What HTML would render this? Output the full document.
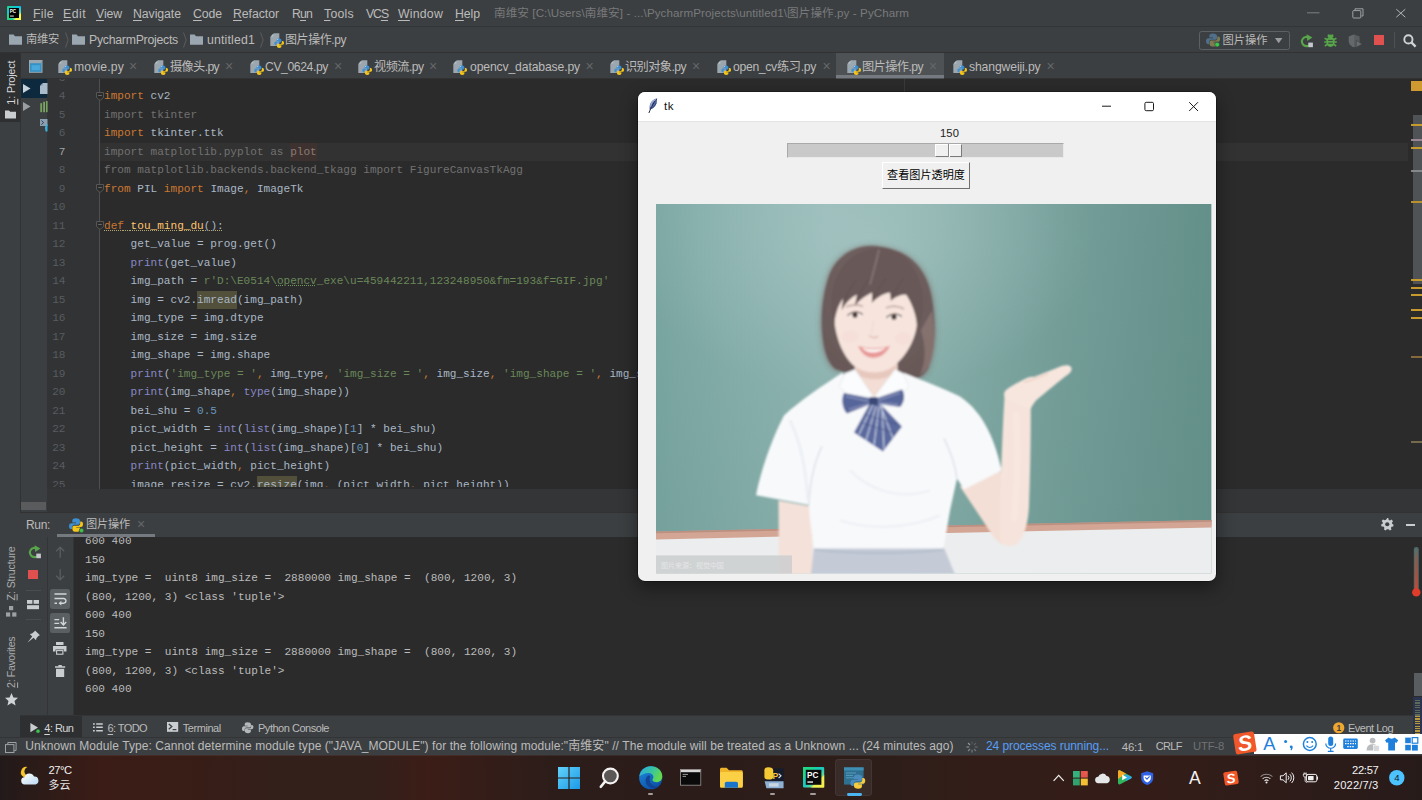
<!DOCTYPE html>
<html lang="zh-CN"><head><meta charset="utf-8"><title>PyCharm</title>
<style>
html,body{margin:0;padding:0;background:#2b2b2b;}
body{width:1422px;height:800px;overflow:hidden;}
#root{position:relative;width:1422px;height:800px;overflow:hidden;background:#2b2b2b;font-family:"Liberation Sans","Noto Sans CJK SC",sans-serif;}
#root *{box-sizing:border-box;}
.a{position:absolute;}
.t{position:absolute;white-space:pre;}
svg{position:absolute;overflow:visible;}
.code{position:absolute;white-space:pre;font:11.08px/18.5px "Liberation Mono","Noto Sans CJK SC",monospace;color:#a9b7c6;}
.k{color:#cc7832;} .s{color:#6a8759;} .n{color:#6897bb;} .b{color:#8888c6;} .u{color:#717171;} .f{color:#ffc66d;}
.hl{background:#52503a;padding:3px 0;}
.ln{position:absolute;left:47px;width:19.5px;text-align:right;font:11.08px/18.5px "Liberation Mono",monospace;color:#606366;}
.m{font-family:"Liberation Mono","Noto Sans CJK SC",monospace;}

</style></head>
<body>
<div id="root">
<!-- base.html -->
<!-- menu bar -->
<div class="a" style="left:0;top:0;width:1422px;height:27px;background:#3c3f41;"></div>
<div class="a" style="left:0;top:26px;width:1422px;height:1px;background:#323435;"></div>
<!-- nav bar -->
<div class="a" style="left:0;top:27px;width:1422px;height:26px;background:#3c3f41;"></div>
<div class="a" style="left:0;top:52px;width:1422px;height:1px;background:#323232;"></div>
<!-- tab bar -->
<div class="a" style="left:20px;top:53px;width:1402px;height:26px;background:#3c3f41;"></div>
<div class="a" style="left:20px;top:78px;width:1402px;height:1px;background:#323232;"></div>
<!-- left stripe -->
<div class="a" style="left:0;top:53px;width:20px;height:684px;background:#3c3f41;"></div>
<div class="a" style="left:0;top:53px;width:20px;height:69px;background:#2d2f30;"></div>
<div class="a" style="left:20px;top:53px;width:1px;height:665px;background:#323232;"></div>
<!-- project sliver -->
<div class="a" style="left:21px;top:79px;width:26px;height:422px;background:#3c3f41;"></div>
<div class="a" style="left:21px;top:79px;width:26px;height:19px;background:#0d293e;"></div>
<!-- gutter -->
<div class="a" style="left:47px;top:79px;width:53px;height:411px;background:#313335;"></div>
<div class="a" style="left:99px;top:79px;width:1px;height:411px;background:#4e4e4e;"></div>
<!-- editor -->
<div class="a" style="left:100px;top:79px;width:1308px;height:411px;background:#2b2b2b;"></div>
<!-- current line -->
<div class="a" style="left:100px;top:142.7px;width:1308px;height:18.5px;background:#323232;"></div>
<!-- right margin guide -->
<div class="a" style="left:904px;top:79px;width:1px;height:411px;background:#3a3a3a;"></div>
<!-- right error stripe -->
<div class="a" style="left:1408px;top:79px;width:14px;height:433px;background:#2b2b2b;"></div>

<!-- icons.html -->
<div class="a" style="left:836px;top:53px;width:108px;height:25.5px;background:#4e5254;"></div><div class="a" style="left:836px;top:75.4px;width:108px;height:3.1px;background:#747a80;"></div>
<svg style="left:7px;top:6px" width="14" height="14" viewBox="0 0 14 14" ><defs><linearGradient id="pcg" x1="0" y1="0" x2="1" y2="1"><stop offset="0" stop-color="#21d789"/><stop offset="0.5" stop-color="#07c3f2"/><stop offset="1" stop-color="#fcf84a"/></linearGradient></defs><rect x="0" y="0" width="14" height="14" rx="1" fill="url(#pcg)"/><path d="M0 7V14H7Z" fill="#21d789"/><path d="M14 7V14H7Z" fill="#fcf84a"/><rect x="2" y="2" width="10" height="10" fill="#000"/><text x="2.8" y="7.3" font-family="Liberation Sans,sans-serif" font-weight="700" font-size="4.6" fill="#fff">PC</text><rect x="3" y="9.6" width="3.8" height="0.9" fill="#fff"/></svg>
<svg style="left:9px;top:33.5px" width="13" height="11" viewBox="0 0 13 11" ><path d="M0 0.5H4.6L6 2.2H13V10.8H0Z" fill="#9aa7b0"/></svg>
<svg style="left:64.5px;top:31.5px" width="4" height="16" viewBox="0 0 4 16" ><path d="M0.5 0.5L3.2 8L0.5 15.5" fill="none" stroke="#5c5f61" stroke-width="0.9"/></svg>
<svg style="left:72px;top:33.5px" width="13" height="11" viewBox="0 0 13 11" ><path d="M0 0.5H4.6L6 2.2H13V10.8H0Z" fill="#9aa7b0"/></svg>
<svg style="left:182.5px;top:31.5px" width="4" height="16" viewBox="0 0 4 16" ><path d="M0.5 0.5L3.2 8L0.5 15.5" fill="none" stroke="#5c5f61" stroke-width="0.9"/></svg>
<svg style="left:190px;top:33.5px" width="13" height="11" viewBox="0 0 13 11" ><path d="M0 0.5H4.6L6 2.2H13V10.8H0Z" fill="#9aa7b0"/></svg>
<svg style="left:260px;top:31.5px" width="4" height="16" viewBox="0 0 4 16" ><path d="M0.5 0.5L3.2 8L0.5 15.5" fill="none" stroke="#5c5f61" stroke-width="0.9"/></svg>
<svg style="left:270px;top:32.5px" width="14.0" height="15.0" viewBox="0 0 14 15" ><path d="M4 0.3H9.3V13H0.3V4Z" fill="#a5b1ba" opacity="0.9"/><path d="M3.4 0.5V3.4H0.5Z" fill="#c3ccd3" opacity="0.75"/><path d="M5 10.2V7.6C5 6.3 6 5.6 7.6 5.6H9.4C10.9 5.6 11.7 6.4 11.7 7.6V9.2H8.4V9.9H10.4" fill="none"/><path d="M8.7 5.4C7.2 5.4 6.6 6 6.6 7V8H8.9V8.5H5.8C4.9 8.5 4.4 9.3 4.4 10.4C4.4 11.5 4.9 12.2 5.8 12.2H6.5V10.9C6.5 10 7.2 9.4 8 9.4H10.3C11 9.4 11.4 8.9 11.4 8.2V7C11.4 6 10.4 5.4 8.7 5.4Z" fill="#3e8fd0"/><path d="M9.3 14.9C10.8 14.9 11.4 14.3 11.4 13.3V12.3H9.1V11.8H12.6C13.5 11.8 14 11 14 9.9C14 8.8 13.5 8.1 12.6 8.1H11.9V9.4C11.9 10.3 11.2 10.9 10.4 10.9H8.1C7.4 10.9 7 11.4 7 12.1V13.3C7 14.3 7.8 14.9 9.3 14.9Z" fill="#f5c518"/><circle cx="7.7" cy="6.6" r="0.5" fill="#dfefff"/></svg>
<svg style="left:29px;top:60px" width="13.5" height="12.8" viewBox="0 0 13.5 12.8" ><rect x="0.5" y="0.5" width="12.5" height="11.8" fill="#3592c4" stroke="#9aa7b0" stroke-width="1"/><rect x="1" y="1" width="11.5" height="2.2" fill="#9aa7b0"/><rect x="2.6" y="5.2" width="8.3" height="5" fill="#4aa8dc"/></svg>
<svg style="left:58px;top:59.5px" width="14.0" height="15.0" viewBox="0 0 14 15" ><path d="M4 0.3H9.3V13H0.3V4Z" fill="#a5b1ba" opacity="0.9"/><path d="M3.4 0.5V3.4H0.5Z" fill="#c3ccd3" opacity="0.75"/><path d="M5 10.2V7.6C5 6.3 6 5.6 7.6 5.6H9.4C10.9 5.6 11.7 6.4 11.7 7.6V9.2H8.4V9.9H10.4" fill="none"/><path d="M8.7 5.4C7.2 5.4 6.6 6 6.6 7V8H8.9V8.5H5.8C4.9 8.5 4.4 9.3 4.4 10.4C4.4 11.5 4.9 12.2 5.8 12.2H6.5V10.9C6.5 10 7.2 9.4 8 9.4H10.3C11 9.4 11.4 8.9 11.4 8.2V7C11.4 6 10.4 5.4 8.7 5.4Z" fill="#3e8fd0"/><path d="M9.3 14.9C10.8 14.9 11.4 14.3 11.4 13.3V12.3H9.1V11.8H12.6C13.5 11.8 14 11 14 9.9C14 8.8 13.5 8.1 12.6 8.1H11.9V9.4C11.9 10.3 11.2 10.9 10.4 10.9H8.1C7.4 10.9 7 11.4 7 12.1V13.3C7 14.3 7.8 14.9 9.3 14.9Z" fill="#f5c518"/><circle cx="7.7" cy="6.6" r="0.5" fill="#dfefff"/></svg>
<svg style="left:154px;top:59.5px" width="14.0" height="15.0" viewBox="0 0 14 15" ><path d="M4 0.3H9.3V13H0.3V4Z" fill="#a5b1ba" opacity="0.9"/><path d="M3.4 0.5V3.4H0.5Z" fill="#c3ccd3" opacity="0.75"/><path d="M5 10.2V7.6C5 6.3 6 5.6 7.6 5.6H9.4C10.9 5.6 11.7 6.4 11.7 7.6V9.2H8.4V9.9H10.4" fill="none"/><path d="M8.7 5.4C7.2 5.4 6.6 6 6.6 7V8H8.9V8.5H5.8C4.9 8.5 4.4 9.3 4.4 10.4C4.4 11.5 4.9 12.2 5.8 12.2H6.5V10.9C6.5 10 7.2 9.4 8 9.4H10.3C11 9.4 11.4 8.9 11.4 8.2V7C11.4 6 10.4 5.4 8.7 5.4Z" fill="#3e8fd0"/><path d="M9.3 14.9C10.8 14.9 11.4 14.3 11.4 13.3V12.3H9.1V11.8H12.6C13.5 11.8 14 11 14 9.9C14 8.8 13.5 8.1 12.6 8.1H11.9V9.4C11.9 10.3 11.2 10.9 10.4 10.9H8.1C7.4 10.9 7 11.4 7 12.1V13.3C7 14.3 7.8 14.9 9.3 14.9Z" fill="#f5c518"/><circle cx="7.7" cy="6.6" r="0.5" fill="#dfefff"/></svg>
<svg style="left:250px;top:59.5px" width="14.0" height="15.0" viewBox="0 0 14 15" ><path d="M4 0.3H9.3V13H0.3V4Z" fill="#a5b1ba" opacity="0.9"/><path d="M3.4 0.5V3.4H0.5Z" fill="#c3ccd3" opacity="0.75"/><path d="M5 10.2V7.6C5 6.3 6 5.6 7.6 5.6H9.4C10.9 5.6 11.7 6.4 11.7 7.6V9.2H8.4V9.9H10.4" fill="none"/><path d="M8.7 5.4C7.2 5.4 6.6 6 6.6 7V8H8.9V8.5H5.8C4.9 8.5 4.4 9.3 4.4 10.4C4.4 11.5 4.9 12.2 5.8 12.2H6.5V10.9C6.5 10 7.2 9.4 8 9.4H10.3C11 9.4 11.4 8.9 11.4 8.2V7C11.4 6 10.4 5.4 8.7 5.4Z" fill="#3e8fd0"/><path d="M9.3 14.9C10.8 14.9 11.4 14.3 11.4 13.3V12.3H9.1V11.8H12.6C13.5 11.8 14 11 14 9.9C14 8.8 13.5 8.1 12.6 8.1H11.9V9.4C11.9 10.3 11.2 10.9 10.4 10.9H8.1C7.4 10.9 7 11.4 7 12.1V13.3C7 14.3 7.8 14.9 9.3 14.9Z" fill="#f5c518"/><circle cx="7.7" cy="6.6" r="0.5" fill="#dfefff"/></svg>
<svg style="left:358px;top:59.5px" width="14.0" height="15.0" viewBox="0 0 14 15" ><path d="M4 0.3H9.3V13H0.3V4Z" fill="#a5b1ba" opacity="0.9"/><path d="M3.4 0.5V3.4H0.5Z" fill="#c3ccd3" opacity="0.75"/><path d="M5 10.2V7.6C5 6.3 6 5.6 7.6 5.6H9.4C10.9 5.6 11.7 6.4 11.7 7.6V9.2H8.4V9.9H10.4" fill="none"/><path d="M8.7 5.4C7.2 5.4 6.6 6 6.6 7V8H8.9V8.5H5.8C4.9 8.5 4.4 9.3 4.4 10.4C4.4 11.5 4.9 12.2 5.8 12.2H6.5V10.9C6.5 10 7.2 9.4 8 9.4H10.3C11 9.4 11.4 8.9 11.4 8.2V7C11.4 6 10.4 5.4 8.7 5.4Z" fill="#3e8fd0"/><path d="M9.3 14.9C10.8 14.9 11.4 14.3 11.4 13.3V12.3H9.1V11.8H12.6C13.5 11.8 14 11 14 9.9C14 8.8 13.5 8.1 12.6 8.1H11.9V9.4C11.9 10.3 11.2 10.9 10.4 10.9H8.1C7.4 10.9 7 11.4 7 12.1V13.3C7 14.3 7.8 14.9 9.3 14.9Z" fill="#f5c518"/><circle cx="7.7" cy="6.6" r="0.5" fill="#dfefff"/></svg>
<svg style="left:453px;top:59.5px" width="14.0" height="15.0" viewBox="0 0 14 15" ><path d="M4 0.3H9.3V13H0.3V4Z" fill="#a5b1ba" opacity="0.9"/><path d="M3.4 0.5V3.4H0.5Z" fill="#c3ccd3" opacity="0.75"/><path d="M5 10.2V7.6C5 6.3 6 5.6 7.6 5.6H9.4C10.9 5.6 11.7 6.4 11.7 7.6V9.2H8.4V9.9H10.4" fill="none"/><path d="M8.7 5.4C7.2 5.4 6.6 6 6.6 7V8H8.9V8.5H5.8C4.9 8.5 4.4 9.3 4.4 10.4C4.4 11.5 4.9 12.2 5.8 12.2H6.5V10.9C6.5 10 7.2 9.4 8 9.4H10.3C11 9.4 11.4 8.9 11.4 8.2V7C11.4 6 10.4 5.4 8.7 5.4Z" fill="#3e8fd0"/><path d="M9.3 14.9C10.8 14.9 11.4 14.3 11.4 13.3V12.3H9.1V11.8H12.6C13.5 11.8 14 11 14 9.9C14 8.8 13.5 8.1 12.6 8.1H11.9V9.4C11.9 10.3 11.2 10.9 10.4 10.9H8.1C7.4 10.9 7 11.4 7 12.1V13.3C7 14.3 7.8 14.9 9.3 14.9Z" fill="#f5c518"/><circle cx="7.7" cy="6.6" r="0.5" fill="#dfefff"/></svg>
<svg style="left:610px;top:59.5px" width="14.0" height="15.0" viewBox="0 0 14 15" ><path d="M4 0.3H9.3V13H0.3V4Z" fill="#a5b1ba" opacity="0.9"/><path d="M3.4 0.5V3.4H0.5Z" fill="#c3ccd3" opacity="0.75"/><path d="M5 10.2V7.6C5 6.3 6 5.6 7.6 5.6H9.4C10.9 5.6 11.7 6.4 11.7 7.6V9.2H8.4V9.9H10.4" fill="none"/><path d="M8.7 5.4C7.2 5.4 6.6 6 6.6 7V8H8.9V8.5H5.8C4.9 8.5 4.4 9.3 4.4 10.4C4.4 11.5 4.9 12.2 5.8 12.2H6.5V10.9C6.5 10 7.2 9.4 8 9.4H10.3C11 9.4 11.4 8.9 11.4 8.2V7C11.4 6 10.4 5.4 8.7 5.4Z" fill="#3e8fd0"/><path d="M9.3 14.9C10.8 14.9 11.4 14.3 11.4 13.3V12.3H9.1V11.8H12.6C13.5 11.8 14 11 14 9.9C14 8.8 13.5 8.1 12.6 8.1H11.9V9.4C11.9 10.3 11.2 10.9 10.4 10.9H8.1C7.4 10.9 7 11.4 7 12.1V13.3C7 14.3 7.8 14.9 9.3 14.9Z" fill="#f5c518"/><circle cx="7.7" cy="6.6" r="0.5" fill="#dfefff"/></svg>
<svg style="left:716.5px;top:59.5px" width="14.0" height="15.0" viewBox="0 0 14 15" ><path d="M4 0.3H9.3V13H0.3V4Z" fill="#a5b1ba" opacity="0.9"/><path d="M3.4 0.5V3.4H0.5Z" fill="#c3ccd3" opacity="0.75"/><path d="M5 10.2V7.6C5 6.3 6 5.6 7.6 5.6H9.4C10.9 5.6 11.7 6.4 11.7 7.6V9.2H8.4V9.9H10.4" fill="none"/><path d="M8.7 5.4C7.2 5.4 6.6 6 6.6 7V8H8.9V8.5H5.8C4.9 8.5 4.4 9.3 4.4 10.4C4.4 11.5 4.9 12.2 5.8 12.2H6.5V10.9C6.5 10 7.2 9.4 8 9.4H10.3C11 9.4 11.4 8.9 11.4 8.2V7C11.4 6 10.4 5.4 8.7 5.4Z" fill="#3e8fd0"/><path d="M9.3 14.9C10.8 14.9 11.4 14.3 11.4 13.3V12.3H9.1V11.8H12.6C13.5 11.8 14 11 14 9.9C14 8.8 13.5 8.1 12.6 8.1H11.9V9.4C11.9 10.3 11.2 10.9 10.4 10.9H8.1C7.4 10.9 7 11.4 7 12.1V13.3C7 14.3 7.8 14.9 9.3 14.9Z" fill="#f5c518"/><circle cx="7.7" cy="6.6" r="0.5" fill="#dfefff"/></svg>
<svg style="left:847px;top:59.5px" width="14.0" height="15.0" viewBox="0 0 14 15" ><path d="M4 0.3H9.3V13H0.3V4Z" fill="#a5b1ba" opacity="0.9"/><path d="M3.4 0.5V3.4H0.5Z" fill="#c3ccd3" opacity="0.75"/><path d="M5 10.2V7.6C5 6.3 6 5.6 7.6 5.6H9.4C10.9 5.6 11.7 6.4 11.7 7.6V9.2H8.4V9.9H10.4" fill="none"/><path d="M8.7 5.4C7.2 5.4 6.6 6 6.6 7V8H8.9V8.5H5.8C4.9 8.5 4.4 9.3 4.4 10.4C4.4 11.5 4.9 12.2 5.8 12.2H6.5V10.9C6.5 10 7.2 9.4 8 9.4H10.3C11 9.4 11.4 8.9 11.4 8.2V7C11.4 6 10.4 5.4 8.7 5.4Z" fill="#3e8fd0"/><path d="M9.3 14.9C10.8 14.9 11.4 14.3 11.4 13.3V12.3H9.1V11.8H12.6C13.5 11.8 14 11 14 9.9C14 8.8 13.5 8.1 12.6 8.1H11.9V9.4C11.9 10.3 11.2 10.9 10.4 10.9H8.1C7.4 10.9 7 11.4 7 12.1V13.3C7 14.3 7.8 14.9 9.3 14.9Z" fill="#f5c518"/><circle cx="7.7" cy="6.6" r="0.5" fill="#dfefff"/></svg>
<svg style="left:953px;top:59.5px" width="14.0" height="15.0" viewBox="0 0 14 15" ><path d="M4 0.3H9.3V13H0.3V4Z" fill="#a5b1ba" opacity="0.9"/><path d="M3.4 0.5V3.4H0.5Z" fill="#c3ccd3" opacity="0.75"/><path d="M5 10.2V7.6C5 6.3 6 5.6 7.6 5.6H9.4C10.9 5.6 11.7 6.4 11.7 7.6V9.2H8.4V9.9H10.4" fill="none"/><path d="M8.7 5.4C7.2 5.4 6.6 6 6.6 7V8H8.9V8.5H5.8C4.9 8.5 4.4 9.3 4.4 10.4C4.4 11.5 4.9 12.2 5.8 12.2H6.5V10.9C6.5 10 7.2 9.4 8 9.4H10.3C11 9.4 11.4 8.9 11.4 8.2V7C11.4 6 10.4 5.4 8.7 5.4Z" fill="#3e8fd0"/><path d="M9.3 14.9C10.8 14.9 11.4 14.3 11.4 13.3V12.3H9.1V11.8H12.6C13.5 11.8 14 11 14 9.9C14 8.8 13.5 8.1 12.6 8.1H11.9V9.4C11.9 10.3 11.2 10.9 10.4 10.9H8.1C7.4 10.9 7 11.4 7 12.1V13.3C7 14.3 7.8 14.9 9.3 14.9Z" fill="#f5c518"/><circle cx="7.7" cy="6.6" r="0.5" fill="#dfefff"/></svg>
<div class="a" style="left:1198.5px;top:30.5px;width:91px;height:19.5px;border:1px solid #5e6163;border-radius:2.5px;"></div>
<svg style="left:1205.5px;top:33px" width="14" height="14" viewBox="0 0 14 14" ><path d="M6.8 0.4C4.3 0.4 3.3 1.4 3.3 3V4.6H7V5.3H2.2C0.8 5.3 0 6.6 0 8.3C0 10 0.8 11.2 2.2 11.2H3.2V9.2C3.2 7.8 4.3 6.8 5.6 6.8H9.2C10.3 6.8 11 6 11 4.9V3C11 1.4 9.5 0.4 6.8 0.4Z" fill="#4f6f8a"/><path d="M7.6 13.6C10.1 13.6 11.1 12.6 11.1 11V9.4H7.4V8.7H12.2C13.6 8.7 14 7.4 14 5.7C14 4.6 13.4 3.6 12.2 3.6H11.4V5.2C11.4 6.6 10.3 7.6 9 7.6H5.4C4.3 7.6 3.6 8.4 3.6 9.5V11C3.6 12.6 4.9 13.6 7.6 13.6Z" fill="#807c52"/><circle cx="11.2" cy="11.6" r="2.4" fill="#35c94d" stroke="#3c3f41" stroke-width="0.6"/></svg>
<svg style="left:1275px;top:38px" width="7.4" height="5.4" viewBox="0 0 7.4 5.4" ><path d="M0 0H7.4L3.7 5.2Z" fill="#9a9da0"/></svg>
<svg style="left:1300px;top:33.5px" width="13.5" height="13.5" viewBox="0 0 13.5 13.5" ><path d="M9.2 3.8A4.6 4.6 0 1 0 10.6 9.6" fill="none" stroke="#57a64a" stroke-width="2.1"/><path d="M6.6 0.2L12.4 3.6L7.2 7Z" fill="#57a64a"/><rect x="8.3" y="8.6" width="4.6" height="4.6" fill="#c4c8cc"/></svg>
<svg style="left:1323.5px;top:33.5px" width="13" height="13.5" viewBox="0 0 13 13.5" ><ellipse cx="6.5" cy="7.8" rx="4.3" ry="5.1" fill="#57a64a"/><path d="M3.6 3.2A2.9 2.6 0 0 1 9.4 3.2Z" fill="#57a64a"/><path d="M0.6 4.2L3.2 5.6M12.4 4.2L9.8 5.6M0.2 8H2.8M12.8 8H10.2M0.8 12L3.2 10.4M12.2 12L9.8 10.4M4 0.6L5 2M9 0.6L8 2" stroke="#57a64a" stroke-width="1.6" fill="none"/><path d="M4.2 6.4H8.8M4.2 9.2H8.8" stroke="#3c3f41" stroke-width="1"/></svg>
<svg style="left:1347.5px;top:33.5px" width="14.5" height="13.5" viewBox="0 0 14.5 13.5" ><path d="M6.2 0.4L11.6 2.4V7.2C11.6 10.2 9 12.4 6.2 13.2C3.4 12.4 0.8 10.2 0.8 7.2V2.4Z" fill="#595c5e"/><path d="M6.2 0.4V13.2C3.4 12.4 0.8 10.2 0.8 7.2V2.4Z" fill="#65686a"/><path d="M8.2 6.4L14.2 9.9L8.2 13.4Z" fill="#6a6d6f" stroke="#3c3f41" stroke-width="0.6"/></svg>
<div class="a" style="left:1374px;top:35.3px;width:9.6px;height:9.6px;background:#e0504e;"></div>
<div class="a" style="left:1393.5px;top:32px;width:1px;height:16px;background:#4d5052;"></div>
<svg style="left:1403px;top:33.5px" width="13.5" height="13.5" viewBox="0 0 13.5 13.5" ><circle cx="5.4" cy="5.4" r="4.1" fill="none" stroke="#d0d3d5" stroke-width="1.9"/><path d="M8.4 8.4L12.6 12.6" stroke="#d0d3d5" stroke-width="2.3"/></svg>
<svg style="left:1300px;top:5px" width="110" height="16" viewBox="1300 5 110 16" ><path d="M1307 12.8H1319.5" stroke="#7c7f81" stroke-width="1"/><path d="M1355 10.4V8.8H1363V16H1361.4" fill="none" stroke="#a9acae" stroke-width="0.9"/><rect x="1352.8" y="10.6" width="8" height="7.4" rx="0.8" fill="none" stroke="#a9acae" stroke-width="0.9"/><path d="M1396.3 9.2L1405.3 17.2M1405.3 9.2L1396.3 17.2" stroke="#b4b7b9" stroke-width="1"/></svg>
<svg style="left:5px;top:110px" width="11" height="8.6" viewBox="0 0 11 8.6" ><path d="M0 0.4H4L5.2 1.8H11V8.6H0Z" fill="#c9cdd0"/></svg>
<svg style="left:5.5px;top:606px" width="10.5" height="10.5" viewBox="0 0 10.5 10.5" ><rect x="0" y="6.4" width="4.2" height="4.2" fill="#9da1a4"/><rect x="6.2" y="6.4" width="4.2" height="4.2" fill="#9da1a4"/><rect x="3" y="0" width="4.2" height="4.2" fill="#9da1a4"/></svg>
<svg style="left:4.5px;top:692.5px" width="13" height="12.5" viewBox="0 0 13 12.5" ><path d="M6.5 0L8.4 4.4L13 4.8L9.5 7.9L10.6 12.5L6.5 10L2.4 12.5L3.5 7.9L0 4.8L4.6 4.4Z" fill="#d0d3d5"/></svg>
<svg style="left:23px;top:84px" width="7.5" height="9" viewBox="0 0 7.5 9" ><path d="M0 0L7.5 4.5L0 9Z" fill="#c6d2dc"/></svg>
<svg style="left:40px;top:83px" width="7.5" height="11" viewBox="0 0 7.5 11" ><path d="M3 0H7.5V11H0V3Z" fill="#a8bccb"/><path d="M2.6 0V2.6H0Z" fill="#7f95a6"/></svg>
<svg style="left:23px;top:102.2px" width="7.5" height="9" viewBox="0 0 7.5 9" ><path d="M0 0L7.5 4.5L0 9Z" fill="#9b9ea1"/></svg>
<svg style="left:40px;top:101px" width="7.5" height="11.5" viewBox="0 0 7.5 11.5" ><rect x="0.3" y="2.2" width="1.8" height="9" fill="#7aa35f"/><rect x="3.2" y="0.8" width="1.8" height="10.4" fill="#7aa35f"/><rect x="6" y="0" width="1.6" height="11.2" fill="#7aa35f"/></svg>
<svg style="left:40px;top:119px" width="7.5" height="13" viewBox="0 0 7.5 13" ><rect x="0" y="0" width="7.5" height="7" fill="#8aa0b2"/><path d="M1.4 1.6L3.6 3.6L1.4 5.6" stroke="#32414d" stroke-width="1" fill="none"/><path d="M7.5 5C5 6 4.4 9 5.6 12.6H7.5Z" fill="#38b1e0"/></svg>
<div class="a" style="left:1411.2px;top:81px;width:10.8px;height:10px;background:#cf9b30;"></div>
<div class="a" style="left:1413px;top:115px;width:9px;height:169px;background:#505355;"></div>
<div class="a" style="left:1410.5px;top:124px;width:11.5px;height:2px;background:#c79a2e;"></div>
<div class="a" style="left:1410.5px;top:146.7px;width:11.5px;height:2px;background:#c79a2e;"></div>
<div class="a" style="left:1410.5px;top:201px;width:11.5px;height:2px;background:#b8902e;"></div>
<div class="a" style="left:1410.5px;top:278.7px;width:11.5px;height:2px;background:#c79a2e;"></div>
<div class="a" style="left:1410.5px;top:286.5px;width:11.5px;height:2px;background:#c79a2e;"></div>
<div class="a" style="left:1410.5px;top:294px;width:11.5px;height:2px;background:#c79a2e;"></div>
<div class="a" style="left:1410.5px;top:309px;width:11.5px;height:2px;background:#c79a2e;"></div>
<div class="a" style="left:1410.5px;top:317px;width:11.5px;height:2px;background:#c79a2e;"></div>
<div class="a" style="left:1410.5px;top:139px;width:11.5px;height:2px;background:#9a8796;"></div>
<div class="a" style="left:1410.5px;top:170px;width:11.5px;height:2px;background:#85878a;"></div>
<div class="a" style="left:1410.5px;top:355.6px;width:11.5px;height:2px;background:#86693a;"></div>
<div class="a" style="left:1410.5px;top:441px;width:11.5px;height:2px;background:#756a4c;"></div>

<!-- editor.html -->
<div class="a" id="ed" style="left:47px;top:79px;width:1361px;height:408px;overflow:hidden;">
<div class="ln" style="left:-1px;top:-10.30px;color:#595c5f">3</div>
<div class="ln" style="left:-1px;top:8.20px;color:#595c5f">4</div>
<div class="code" style="left:57px;top:8.20px"><span class="k">import</span> cv2</div>
<div class="ln" style="left:-1px;top:26.70px;color:#595c5f">5</div>
<div class="code" style="left:57px;top:26.70px"><span class="u">import tkinter</span></div>
<div class="ln" style="left:-1px;top:45.20px;color:#595c5f">6</div>
<div class="code" style="left:57px;top:45.20px"><span class="k">import</span> tkinter.ttk</div>
<div class="ln" style="left:-1px;top:63.70px;color:#a4a3a3">7</div>
<div class="code" style="left:57px;top:63.70px"><span class="u">import matplotlib.pyplot as <span style="background:#3e3230;color:#8a7a72;padding:3px 0">plot</span></span></div>
<div class="ln" style="left:-1px;top:82.20px;color:#595c5f">8</div>
<div class="code" style="left:57px;top:82.20px"><span class="u">from matplotlib.backends.backend_tkagg import FigureCanvasTkAgg</span></div>
<div class="ln" style="left:-1px;top:100.70px;color:#595c5f">9</div>
<div class="code" style="left:57px;top:100.70px"><span class="k">from</span> PIL <span class="k">import</span> Image<span class="k">,</span> ImageTk</div>
<div class="ln" style="left:-1px;top:119.20px;color:#595c5f">10</div>
<div class="ln" style="left:-1px;top:137.70px;color:#595c5f">11</div>
<div class="code" style="left:57px;top:137.70px"><span style="text-decoration:underline dotted #b3a672;text-decoration-thickness:1.3px;text-underline-offset:1.2px"><span class="k">def</span> <span class="f">tou_ming_du</span>():</span></div>
<div class="ln" style="left:-1px;top:156.20px;color:#595c5f">12</div>
<div class="code" style="left:57px;top:156.20px">    get_value = prog.get()</div>
<div class="ln" style="left:-1px;top:174.70px;color:#595c5f">13</div>
<div class="code" style="left:57px;top:174.70px">    <span class="b">print</span>(get_value)</div>
<div class="ln" style="left:-1px;top:193.20px;color:#595c5f">14</div>
<div class="code" style="left:57px;top:193.20px">    img_path = <span class="s">r'D:\E0514\<span style="text-decoration:underline dotted #6f9a5c;text-decoration-thickness:1.3px;text-underline-offset:1.2px">opencv</span>_exe\u=459442211,123248950&amp;fm=193&amp;f=GIF.jpg'</span></div>
<div class="ln" style="left:-1px;top:211.70px;color:#595c5f">15</div>
<div class="code" style="left:57px;top:211.70px">    img = cv2.<span class="hl">imread</span>(img_path)</div>
<div class="ln" style="left:-1px;top:230.20px;color:#595c5f">16</div>
<div class="code" style="left:57px;top:230.20px">    img_type = img.dtype</div>
<div class="ln" style="left:-1px;top:248.70px;color:#595c5f">17</div>
<div class="code" style="left:57px;top:248.70px">    img_size = img.size</div>
<div class="ln" style="left:-1px;top:267.20px;color:#595c5f">18</div>
<div class="code" style="left:57px;top:267.20px">    img_shape = img.shape</div>
<div class="ln" style="left:-1px;top:285.70px;color:#595c5f">19</div>
<div class="code" style="left:57px;top:285.70px">    <span class="b">print</span>(<span class="s">'img_type = '</span><span class="k">,</span> img_type<span class="k">,</span> <span class="s">'img_size = '</span><span class="k">,</span> img_size<span class="k">,</span> <span class="s">'img_shape = '</span><span class="k">,</span> img_shape)</div>
<div class="ln" style="left:-1px;top:304.20px;color:#595c5f">20</div>
<div class="code" style="left:57px;top:304.20px">    <span class="b">print</span>(img_shape<span class="k">,</span> <span class="b">type</span>(img_shape))</div>
<div class="ln" style="left:-1px;top:322.70px;color:#595c5f">21</div>
<div class="code" style="left:57px;top:322.70px">    bei_shu = <span class="n">0.5</span></div>
<div class="ln" style="left:-1px;top:341.20px;color:#595c5f">22</div>
<div class="code" style="left:57px;top:341.20px">    pict_width = <span class="b">int</span>(<span class="b">list</span>(img_shape)[<span class="n">1</span>] * bei_shu)</div>
<div class="ln" style="left:-1px;top:359.70px;color:#595c5f">23</div>
<div class="code" style="left:57px;top:359.70px">    pict_height = <span class="b">int</span>(<span class="b">list</span>(img_shape)[<span class="n">0</span>] * bei_shu)</div>
<div class="ln" style="left:-1px;top:378.20px;color:#595c5f">24</div>
<div class="code" style="left:57px;top:378.20px">    <span class="b">print</span>(pict_width<span class="k">,</span> pict_height)</div>
<div class="ln" style="left:-1px;top:396.70px;color:#595c5f">25</div>
<div class="code" style="left:57px;top:396.70px">    image_resize = cv2.<span class="hl">resize</span>(img<span class="k">,</span> (pict_width<span class="k">,</span> pict_height))</div>
<svg style="left:48.5px;top:13.0px" width="8" height="9" viewBox="0 0 8 9"><path d="M0.5 0.5H7.5V5.5L4 8.5L0.5 5.5Z" fill="#2b2b2b" stroke="#5a5a5a" stroke-width="0.9"/><path d="M2.2 3.5H5.8" stroke="#707070" stroke-width="0.9"/></svg>
<svg style="left:48.5px;top:105.4px" width="8" height="9" viewBox="0 0 8 9"><path d="M0.5 0.5H7.5V5.5L4 8.5L0.5 5.5Z" fill="#2b2b2b" stroke="#5a5a5a" stroke-width="0.9"/><path d="M2.2 3.5H5.8" stroke="#707070" stroke-width="0.9"/></svg>
<svg style="left:48.5px;top:142.4px" width="8" height="9" viewBox="0 0 8 9"><path d="M0.5 0.5H7.5V5.5L4 8.5L0.5 5.5Z" fill="#2b2b2b" stroke="#5a5a5a" stroke-width="0.9"/><path d="M2.2 3.5H5.8" stroke="#707070" stroke-width="0.9"/></svg>
</div>

<!-- run.html -->
<div class="a" style="left:47px;top:488.5px;width:1375px;height:23.5px;background:#333537;"></div>
<div class="a" style="left:21px;top:488.5px;width:26px;height:23.5px;background:#3c3f41;"></div>
<div class="a" style="left:20.5px;top:502px;width:25px;height:7.6px;background:#595b5d;"></div>
<div class="a" style="left:20px;top:512px;width:1402px;height:25px;background:#3c3f41;"></div>
<div class="a" style="left:20px;top:511.5px;width:1402px;height:1px;background:#323232;"></div>
<div class="a" style="left:57px;top:533.6px;width:98px;height:3.2px;background:#747a80;"></div>
<svg style="left:69px;top:518px" width="14" height="14" viewBox="0 0 14 14"><path d="M6.8 0.3C4.3 0.3 3.3 1.3 3.3 2.9V4.6H7V5.2H2.2C0.8 5.2 0 6.5 0 8.2C0 9.9 0.8 11.1 2.2 11.1H3.2V9.1C3.2 7.7 4.3 6.7 5.6 6.7H9.2C10.3 6.7 11 5.9 11 4.8V2.9C11 1.3 9.5 0.3 6.8 0.3Z" fill="#3e8fd0"/><path d="M7.4 13.8C9.9 13.8 10.9 12.8 10.9 11.2V9.5H7.2V8.9H12C13.4 8.9 14 7.6 14 5.9C14 4.8 13.4 3.6 12 3.6H11.2V5.4C11.2 6.8 10.1 7.8 8.8 7.8H5.2C4.1 7.8 3.4 8.6 3.4 9.7V11.2C3.4 12.8 4.7 13.8 7.4 13.8Z" fill="#f5c518"/></svg>
<svg style="left:78.5px;top:527.5px" width="5" height="5" viewBox="0 0 5 5"><circle cx="2.5" cy="2.5" r="2.2" fill="#3dc450" stroke="#3c3f41" stroke-width="0.6"/></svg>
<div class="a" style="left:20px;top:537px;width:54px;height:178.4px;background:#3c3f41;"></div>
<div class="a" style="left:46.5px;top:537px;width:0.8px;height:178px;background:#323435;"></div>
<div class="a" style="left:73.3px;top:537px;width:0.8px;height:178px;background:#323435;"></div>
<div class="a" style="left:74px;top:537px;width:1348px;height:178.4px;background:#2b2b2b;"></div>
<svg style="left:27.5px;top:544.5px" width="13.5" height="13.5" viewBox="0 0 13.5 13.5"><path d="M9.2 3.8A4.6 4.6 0 1 0 10.6 9.6" fill="none" stroke="#57a64a" stroke-width="2.1"/><path d="M6.6 0.2L12.4 3.6L7.2 7Z" fill="#57a64a"/><rect x="8.3" y="8.6" width="4.6" height="4.6" fill="#c4c8cc"/></svg>
<div class="a" style="left:28px;top:569.5px;width:10.3px;height:9.6px;background:#e0504e;"></div>
<div class="a" style="left:26px;top:590px;width:15px;height:0.8px;background:#4a4d4f;"></div>
<svg style="left:27.4px;top:600px" width="12" height="9.2" viewBox="0 0 12 9.2"><rect x="0" y="0" width="5.4" height="3.8" fill="#c9cdd0"/><rect x="6.6" y="0" width="5.4" height="3.8" fill="#c9cdd0"/><rect x="0" y="5.2" width="12" height="4" fill="#c9cdd0"/></svg>
<div class="a" style="left:26px;top:619px;width:15px;height:0.8px;background:#4a4d4f;"></div>
<svg style="left:26.8px;top:629.5px" width="13.5" height="12.5" viewBox="0 0 13.5 12.5"><path d="M8 0.4L13 5.2L11.6 5.8L9.4 8.2L9 10.2L6.6 7.8L0.6 12.4L5.2 6.4L2.8 4L5 3.6L7.4 1.4Z" fill="#c9cdd0"/></svg>
<svg style="left:54.5px;top:545.5px" width="10.5" height="12" viewBox="0 0 10.5 12"><path d="M5.2 11.8V1.4M1.2 5.2L5.2 1.2L9.2 5.2" fill="none" stroke="#5a5d5f" stroke-width="1.3"/></svg>
<svg style="left:54.5px;top:568.5px" width="10.5" height="12" viewBox="0 0 10.5 12"><path d="M5.2 0.2V10.6M1.2 6.8L5.2 10.8L9.2 6.8" fill="none" stroke="#5a5d5f" stroke-width="1.3"/></svg>
<div class="a" style="left:49.5px;top:589.3px;width:20.5px;height:19.3px;background:#5a5f62;border-radius:2.5px;"></div>
<svg style="left:53.5px;top:593.2px" width="13" height="11.5" viewBox="0 0 13 11.5"><path d="M0.5 1H12.5M0.5 5.5H9.6A2.3 2.3 0 0 1 9.6 10.2H5.6M0.5 10.2H3" fill="none" stroke="#d3d6d8" stroke-width="1.4"/><path d="M7.4 7.8L4.6 10.2L7.4 12.4Z" fill="#d3d6d8"/></svg>
<div class="a" style="left:49.5px;top:613.2px;width:20.5px;height:19.6px;background:#5a5f62;border-radius:2.5px;"></div>
<svg style="left:53.5px;top:617px" width="13" height="12" viewBox="0 0 13 12"><path d="M0.4 2.6H5.2M0.4 6.4H5.2M0.4 10.8H12.6" fill="none" stroke="#d3d6d8" stroke-width="1.4"/><path d="M9.4 0.2V7.6M6.6 5L9.4 8L12.2 5" fill="none" stroke="#d3d6d8" stroke-width="1.4"/></svg>
<svg style="left:53.2px;top:641.5px" width="13.5" height="12.6" viewBox="0 0 13.5 12.6"><rect x="3" y="0" width="7.5" height="3" fill="#c9cdd0"/><path d="M0 4H13.5V9.6H11V7.4H2.5V9.6H0Z" fill="#c9cdd0"/><rect x="3.6" y="8.6" width="6.3" height="3.6" fill="none" stroke="#c9cdd0" stroke-width="1.1"/></svg>
<svg style="left:55px;top:664.5px" width="10.2" height="12" viewBox="0 0 10.2 12"><path d="M3.4 0H6.8V1.2H10.2V2.8H0V1.2H3.4Z" fill="#c9cdd0"/><path d="M1 3.8H9.2V12H1Z" fill="#c9cdd0"/></svg>
<svg style="left:1380.5px;top:518px" width="12.5" height="12.5" viewBox="0 0 12.5 12.5"><path d="M6.25 0L7.3 0.1L7.7 1.9L9 2.5L10.6 1.6L12 3.3L10.9 4.7L11.3 6L12.5 6.6L12.3 8.4L10.6 8.7L9.9 9.9L10.5 11.6L8.9 12.4L7.6 11.2H5.9L4.6 12.4L3 11.6L3.4 9.8L2.4 8.6L0.5 8.4L0.1 6.6L1.7 5.8L1.8 4.4L0.7 3L2 1.5L3.7 2.3L5 1.7Z" fill="#c9cdd0"/><circle cx="6.25" cy="6.25" r="2.1" fill="#3c3f41"/></svg>
<div class="a" style="left:1405.5px;top:524px;width:9.5px;height:1.6px;background:#c9cdd0;"></div>
<div class="a" style="left:1408px;top:537px;width:14px;height:181px;background:#2b2b2b;"></div>
<svg style="left:1410px;top:545px" width="12" height="54" viewBox="1410 545 12 54"><defs><linearGradient id="thg" x1="0" y1="0" x2="0" y2="1"><stop offset="0" stop-color="#56706c"/><stop offset="0.25" stop-color="#8a5a4c"/><stop offset="1" stop-color="#d8402e"/></linearGradient></defs><rect x="1413.8" y="547" width="5" height="44" rx="2.4" fill="#4f6a68"/><rect x="1414.9" y="549" width="2.8" height="42" rx="1.2" fill="url(#thg)"/><circle cx="1416.3" cy="592.4" r="4.2" fill="#e03c2a"/></svg>
<div class="a" style="left:1414px;top:673px;width:8px;height:22.5px;background:#5a5d5f;"></div>

<!-- status.html -->
<div class="a" style="left:0px;top:715.4px;width:1422px;height:22px;background:#3c3f41;"></div>
<div class="a" style="left:20px;top:715px;width:1402px;height:0.8px;background:#323435;"></div>
<div class="a" style="left:20px;top:716.4px;width:61.5px;height:20.6px;background:#2d2f30;"></div>
<svg style="left:30px;top:723px" width="10.5" height="10.5" viewBox="0 0 10.5 10.5"><path d="M0.4 0L8 4.6L0.4 9.2Z" fill="#c9cdd0"/><circle cx="8" cy="8.2" r="2.1" fill="#3dc450" stroke="#2d2f30" stroke-width="0.6"/></svg>
<svg style="left:93px;top:723.2px" width="9.8" height="8.6" viewBox="0 0 9.8 8.6"><path d="M0 0.9H1.8M3.2 0.9H9.8M0 4.3H1.8M3.2 4.3H9.8M0 7.7H1.8M3.2 7.7H9.8" stroke="#c9cdd0" stroke-width="1.5"/></svg>
<svg style="left:167px;top:722px" width="11.2" height="9.8" viewBox="0 0 11.2 9.8"><rect x="0" y="0" width="11.2" height="9.8" fill="#c9cdd0"/><path d="M1.8 2L4.8 4.6L1.8 7.2" fill="none" stroke="#3c3f41" stroke-width="1.3"/><path d="M5.6 7.6H9.4" stroke="#3c3f41" stroke-width="1.2"/></svg>
<svg style="left:242px;top:721.6px" width="11.4" height="11.4" viewBox="0 0 14 14"><path d="M6.8 0.3C4.3 0.3 3.3 1.3 3.3 2.9V4.6H7V5.2H2.2C0.8 5.2 0 6.5 0 8.2C0 9.9 0.8 11.1 2.2 11.1H3.2V9.1C3.2 7.7 4.3 6.7 5.6 6.7H9.2C10.3 6.7 11 5.9 11 4.8V2.9C11 1.3 9.5 0.3 6.8 0.3Z" fill="#b4b8bb"/><path d="M7.4 13.8C9.9 13.8 10.9 12.8 10.9 11.2V9.5H7.2V8.9H12C13.4 8.9 14 7.6 14 5.9C14 4.8 13.4 3.6 12 3.6H11.2V5.4C11.2 6.8 10.1 7.8 8.8 7.8H5.2C4.1 7.8 3.4 8.6 3.4 9.7V11.2C3.4 12.8 4.7 13.8 7.4 13.8Z" fill="#b4b8bb"/></svg>
<svg style="left:1332.5px;top:722px" width="11.5" height="11.5" viewBox="0 0 11.5 11.5"><circle cx="5.75" cy="5.75" r="5.6" fill="#f0a732"/><text x="5.75" y="9" text-anchor="middle" font-family="Liberation Sans,sans-serif" font-weight="700" font-size="8.4" fill="#3c3f41">1</text></svg>
<div class="a" style="left:0px;top:737px;width:1422px;height:19px;background:#3c3f41;"></div>
<div class="a" style="left:0px;top:736.6px;width:1422px;height:0.8px;background:#323435;"></div>
<svg style="left:5px;top:741.6px" width="11.6" height="11" viewBox="0 0 11.6 11"><rect x="0.5" y="2.6" width="8.4" height="7.9" fill="none" stroke="#9da1a4" stroke-width="1"/><path d="M2.8 2.4V0.5H11.1V8.4H9.2" fill="none" stroke="#9da1a4" stroke-width="1"/></svg>
<svg style="left:966px;top:740.5px" width="12" height="12" viewBox="0 0 12 12"><path d="M6 0.4V3.2" stroke="#9da1a4" stroke-width="1.2" opacity="0.25" transform="rotate(0 6 6)"/><path d="M6 0.4V3.2" stroke="#9da1a4" stroke-width="1.2" opacity="0.34" transform="rotate(45 6 6)"/><path d="M6 0.4V3.2" stroke="#9da1a4" stroke-width="1.2" opacity="0.43" transform="rotate(90 6 6)"/><path d="M6 0.4V3.2" stroke="#9da1a4" stroke-width="1.2" opacity="0.52" transform="rotate(135 6 6)"/><path d="M6 0.4V3.2" stroke="#9da1a4" stroke-width="1.2" opacity="0.61" transform="rotate(180 6 6)"/><path d="M6 0.4V3.2" stroke="#9da1a4" stroke-width="1.2" opacity="0.70" transform="rotate(225 6 6)"/><path d="M6 0.4V3.2" stroke="#9da1a4" stroke-width="1.2" opacity="0.79" transform="rotate(270 6 6)"/><path d="M6 0.4V3.2" stroke="#9da1a4" stroke-width="1.2" opacity="0.88" transform="rotate(315 6 6)"/></svg>
<div class="a" style="left:1412.8px;top:697px;width:8.8px;height:40px;background:#2a3350;"></div>
<div class="a" style="left:1414.6px;top:700px;width:5px;height:36px;background:repeating-linear-gradient(180deg,#5c6a58 0,#5c6a58 1.2px,#2f3547 1.2px,#2f3547 2.4px);"></div>
<div class="a" style="left:1414.6px;top:716px;width:5px;height:20px;background:repeating-linear-gradient(180deg,#b89a3c 0,#b89a3c 1.2px,#3a3a40 1.2px,#3a3a40 2.4px);"></div>
<div class="a" style="left:1254px;top:734px;width:168px;height:20px;background:#ffffff;"></div>
<svg style="left:1232px;top:729.5px" width="26" height="26" viewBox="0 0 26 26"><g transform="rotate(-9 13 13)"><rect x="2.4" y="2.6" width="21" height="20.6" rx="2.6" fill="#f0582a"/><text x="13" y="20.6" text-anchor="middle" font-family="Liberation Sans,sans-serif" font-weight="700" font-style="italic" font-size="21.5" fill="#ffffff">S</text></g></svg>
<svg style="left:1262px;top:736px" width="160" height="16" viewBox="1262 736 160 16"><text x="1263.2" y="750.3" font-family="Liberation Sans,sans-serif" font-size="18.4" fill="#1e80dc">A</text><circle cx="1285.6" cy="741.4" r="1.5" fill="#1e80dc"/><path d="M1291 746.4C1292.8 746.4 1293.4 748.6 1291.2 750.4L1290.4 749.8C1291.4 748.8 1291.2 748 1290.2 747.8Z" fill="#1e80dc"/><circle cx="1291.2" cy="746.8" r="1.4" fill="#1e80dc"/><circle cx="1309.8" cy="744" r="6.4" fill="none" stroke="#1e80dc" stroke-width="1.5"/><circle cx="1307.4" cy="742" r="1" fill="#1e80dc"/><circle cx="1312.2" cy="742" r="1" fill="#1e80dc"/><path d="M1306.4 745.6Q1309.8 749.4 1313.2 745.6" fill="none" stroke="#1e80dc" stroke-width="1.2"/><rect x="1328.2" y="736.6" width="5" height="9.4" rx="2.5" fill="#1e80dc"/><path d="M1325.8 743.4A4.9 4.9 0 0 0 1335.6 743.4M1330.7 748.4V751.4M1327.8 751.4H1333.6" fill="none" stroke="#1e80dc" stroke-width="1.2"/><rect x="1343.2" y="738.6" width="14.6" height="10.4" rx="1.4" fill="#1e80dc"/><path d="M1345 741H1356M1345 743.6H1356M1347.2 746.6H1353.8" stroke="#fff" stroke-width="1.1" stroke-dasharray="1.5 1"/><circle cx="1372.6" cy="740.6" r="2.9" fill="#b9bcbf"/><path d="M1366.6 750.6C1366.6 746 1369 744.2 1372.6 744.2C1376.2 744.2 1378.6 746 1378.6 750.6Z" fill="#b9bcbf"/><rect x="1373.6" y="745.6" width="5.6" height="5.6" fill="#d6d8da" stroke="#fff" stroke-width="0.6"/><path d="M1388.6 737.6L1385 740.2L1386.8 743L1388.2 742.2V750.4H1395V742.2L1396.4 743L1398.2 740.2L1394.6 737.6C1393.4 739 1389.8 739 1388.6 737.6Z" fill="#1e80dc"/><rect x="1405.2" y="737.6" width="5.6" height="5.6" fill="#1e80dc"/><rect x="1412.2" y="737.6" width="5.6" height="5.6" fill="none" stroke="#1e80dc" stroke-width="1.2"/><rect x="1405.2" y="744.8" width="5.6" height="5.6" fill="#1e80dc"/><rect x="1412" y="744.8" width="5.8" height="5.8" fill="#1e80dc"/></svg>

<!-- taskbar.html -->
<div class="a" style="left:0;top:755.4px;width:1422px;height:44.6px;background:linear-gradient(90deg,#221a1a 0px,#2c1b18 40px,#3b1c16 100px,#381d17 200px,#33201b 285px,#33201b 370px,#3c1d17 427px,#351d18 480px,#2c1d1a 560px,#2b1c19 700px,#2d1e1a 870px,#331d18 1000px,#341d18 1150px,#2d1c19 1300px,#271b1a 1422px);"></div>
<div class="a" style="left:0;top:755.4px;width:1422px;height:1px;background:rgba(255,255,255,0.07);"></div>
<svg style="left:19px;top:766px" width="21" height="19" viewBox="0 0 21 19"><path d="M8.4 1A5.4 5.4 0 1 0 11.6 9.6A4.4 4.4 0 0 1 8.4 1Z" fill="#f7c52a"/><defs><linearGradient id="cl" x1="0" y1="0" x2="1" y2="1"><stop offset="0" stop-color="#ffffff"/><stop offset="1" stop-color="#bcd9f3"/></linearGradient></defs><path d="M6 18.4A3.6 3.6 0 0 1 5.6 11.2A5 5 0 0 1 15 10.6A4 4 0 0 1 16.6 18.4Z" fill="url(#cl)"/></svg>
<svg style="left:557.6px;top:767.4px" width="22" height="22" viewBox="0 0 22 22"><defs><linearGradient id="wg" x1="0" y1="0" x2="1" y2="1"><stop offset="0" stop-color="#63d2fb"/><stop offset="1" stop-color="#1b9ae6"/></linearGradient></defs><path d="M0 0H10.4V10.4H0ZM11.6 0H22V10.4H11.6ZM0 11.6H10.4V22H0ZM11.6 11.6H22V22H11.6Z" fill="url(#wg)"/></svg>
<svg style="left:599px;top:766px" width="22" height="24" viewBox="0 0 22 24"><circle cx="11.4" cy="10" r="7.4" fill="#5b5756" stroke="#f3f3f3" stroke-width="2.1"/><path d="M6.2 15.4L1.8 20.8" stroke="#f3f3f3" stroke-width="2.6" stroke-linecap="round"/></svg>
<svg style="left:639px;top:766px" width="23.5" height="23.5" viewBox="0 0 23.5 23.5"><defs><linearGradient id="eg1" x1="0" y1="0" x2="1" y2="0.4"><stop offset="0" stop-color="#2ba7e8"/><stop offset="0.55" stop-color="#37c3a4"/><stop offset="1" stop-color="#62d84f"/></linearGradient><linearGradient id="eg2" x1="0" y1="0" x2="0.6" y2="1"><stop offset="0" stop-color="#1f8fe0"/><stop offset="1" stop-color="#0c4fa8"/></linearGradient></defs><circle cx="11.75" cy="11.75" r="11.6" fill="url(#eg2)"/><path d="M0.4 10.4C1.2 4.4 6 0.2 11.8 0.2C18.6 0.2 23.3 5 23.3 10.2C23.3 14 20.6 16.2 17.6 16.2C15 16.2 13.4 15 13.4 13.8C13.4 12.8 14.4 12.6 14.4 11C14.4 9 12.4 7 9.4 7C5.6 7 2.2 9 0.4 10.4Z" fill="url(#eg1)"/><path d="M9.2 9.4C7.6 10.4 6.6 12.2 6.6 14.4C6.6 18.4 10 22 15 22C17.4 22 19.4 21.2 21 19.8C18.8 21 15.8 20.8 13.6 19.2C11 17.4 9.8 13.6 11.4 10.6C11 9.8 10.2 9.4 9.2 9.4Z" fill="#123f8c" opacity="0.85"/></svg>
<div class="a" style="left:647.6px;top:792.8px;width:5.6px;height:2.6px;background:#a39d9b;border-radius:1.3px;"></div>
<svg style="left:680px;top:768.8px" width="21.2" height="16.6" viewBox="0 0 21.2 16.6"><rect x="0.4" y="0.4" width="20.4" height="15.8" fill="#0a0a0a" stroke="#9a9696" stroke-width="0.8"/><rect x="0.8" y="0.8" width="19.6" height="2.4" fill="#d8d6d6"/><path d="M2.6 5.4H8M2.6 7.4H6" stroke="#bdbdbd" stroke-width="0.8"/></svg>
<svg style="left:720.4px;top:767.4px" width="22.8" height="20.8" viewBox="0 0 22.8 20.8"><path d="M0 2.4C0 1.4 0.6 0.8 1.6 0.8H6.6L9 3.2H21.2C22.2 3.2 22.8 3.8 22.8 4.8V19H0Z" fill="#f0b429"/><path d="M0 6.4C0 5.6 0.6 5 1.4 5H21.4C22.2 5 22.8 5.6 22.8 6.4V19.4C22.8 20.2 22.2 20.8 21.4 20.8H1.4C0.6 20.8 0 20.2 0 19.4Z" fill="#fcd045"/><path d="M4.8 20.8V16.6C4.8 15.6 5.6 14.8 6.6 14.8H16.2C17.2 14.8 18 15.6 18 16.6V20.8Z" fill="#1b74cc"/></svg>
<svg style="left:762.6px;top:766.8px" width="20.6" height="21.4" viewBox="0 0 20.6 21.4"><rect x="2.6" y="1.4" width="18" height="14.6" fill="#141b2b"/><path d="M1.6 14.2H20.6V21.2H3.4Z" fill="#8eb1d3"/><rect x="6" y="16.2" width="9.6" height="3.4" fill="#c9d6e4"/><path d="M5.2 0.2C2.6 0.2 1.4 1.4 1.4 3.2V9.8C1.4 11.6 2.6 12.6 4.6 12.6H7.4C9.2 12.6 10.2 11.4 10.2 9.8V3.2C10.2 1.4 8.4 0.2 5.2 0.2Z" fill="#f6c834"/><text x="9.4" y="11.6" font-family="Liberation Sans,sans-serif" font-weight="700" font-size="8.6" fill="#f6c834">P</text><path d="M15.6 6.6L18 8.8L15.6 11" fill="none" stroke="#dfe6f2" stroke-width="1.1"/></svg>
<div class="a" style="left:769.6px;top:792.8px;width:5.6px;height:2.6px;background:#a39d9b;border-radius:1.3px;"></div>
<svg style="left:802.6px;top:767.2px" width="21.2" height="20.6" viewBox="0 0 21.2 20.6"><defs><linearGradient id="pcg2" x1="0" y1="0" x2="1" y2="1"><stop offset="0" stop-color="#21d789"/><stop offset="0.5" stop-color="#19c9c0"/><stop offset="1" stop-color="#fcf84a"/></linearGradient></defs><rect x="0" y="0" width="21.2" height="20.6" rx="1" fill="url(#pcg2)"/><path d="M21.2 8V20.6H8Z" fill="#f2ee4c"/><path d="M0 0H12L0 12Z" fill="#21d789"/><rect x="2.8" y="2.8" width="15.6" height="15" fill="#0b0b0b"/><text x="4" y="11.4" font-family="Liberation Sans,sans-serif" font-weight="700" font-size="8.2" fill="#fff">PC</text><rect x="4.4" y="14.4" width="5.6" height="1.3" fill="#fff"/></svg>
<div class="a" style="left:810px;top:792.8px;width:5.6px;height:2.6px;background:#a39d9b;border-radius:1.3px;"></div>
<div class="a" style="left:835px;top:758.6px;width:37.4px;height:37.2px;background:rgba(255,255,255,0.06);border-radius:3.5px;border:0.6px solid rgba(255,255,255,0.05);"></div>
<svg style="left:844px;top:767.4px" width="22" height="22" viewBox="0 0 22 22"><rect x="0" y="0.4" width="19.6" height="17.2" fill="#2f6f8f"/><rect x="0" y="0.4" width="19.6" height="3" fill="#3f8fb4"/><path d="M2 6H12M2 8.4H9M2 10.8H11" stroke="#5aa2c2" stroke-width="0.9"/><g transform="translate(6.4 7.2) scale(1.06)"><path d="M6.8 0.3C4.3 0.3 3.3 1.3 3.3 2.9V4.6H7V5.2H2.2C0.8 5.2 0 6.5 0 8.2C0 9.9 0.8 11.1 2.2 11.1H3.2V9.1C3.2 7.7 4.3 6.7 5.6 6.7H9.2C10.3 6.7 11 5.9 11 4.8V2.9C11 1.3 9.5 0.3 6.8 0.3Z" fill="#4b8bbe"/><path d="M7.4 13.8C9.9 13.8 10.9 12.8 10.9 11.2V9.5H7.2V8.9H12C13.4 8.9 14 7.6 14 5.9C14 4.8 13.4 3.6 12 3.6H11.2V5.4C11.2 6.8 10.1 7.8 8.8 7.8H5.2C4.1 7.8 3.4 8.6 3.4 9.7V11.2C3.4 12.8 4.7 13.8 7.4 13.8Z" fill="#f7cc3e"/></g></svg>
<div class="a" style="left:847px;top:792.8px;width:14.8px;height:2.8px;background:#4cb4f0;border-radius:1.4px;"></div>
<svg style="left:1052.5px;top:774px" width="11.4" height="8" viewBox="0 0 11.4 8"><path d="M0.6 6.8L5.7 1.4L10.8 6.8" fill="none" stroke="#f0f0f0" stroke-width="1.2"/></svg>
<svg style="left:1073px;top:770.6px" width="14.8" height="14.4" viewBox="0 0 14.8 14.4"><rect x="0" y="0" width="6.8" height="6.6" fill="#34b27b"/><rect x="7.8" y="0" width="7" height="6.6" fill="#e2574c"/><circle cx="12.6" cy="2" r="1.6" fill="#f05a4f"/><rect x="0" y="7.6" width="6.8" height="6.8" fill="#2fa36f"/><rect x="7.8" y="7.6" width="7" height="6.8" fill="#f2c037"/></svg>
<svg style="left:1095px;top:772.6px" width="15.6" height="10.4" viewBox="0 0 15.6 10.4"><path d="M3.4 10.2A3.2 3.2 0 0 1 3.2 3.8A4.6 4.6 0 0 1 11.6 3A3.7 3.7 0 0 1 12.2 10.2Z" fill="#e4e6e8"/></svg>
<svg style="left:1117.4px;top:770.4px" width="15.2" height="14.6" viewBox="0 0 15.2 14.6"><path d="M1 1.6C1 0.4 2.2 -0.2 3.2 0.4L14 6.2C15 6.8 15 8 14 8.6L3.2 14.2C2.2 14.8 1 14.2 1 13Z" fill="#2fb65c"/><path d="M1 1.6C1 0.4 2.2 -0.2 3.2 0.4L9 3.6L1 9Z" fill="#f7a928"/><path d="M8 4L14 6.6C15 7.2 15 8 14 8.6L9 11Z" fill="#31a8e8"/><path d="M5.2 4.6L10 7.4L5.2 10.2Z" fill="#fff"/></svg>
<svg style="left:1141px;top:770.6px" width="12.4" height="14.2" viewBox="0 0 12.4 14.2"><path d="M6.2 0.2L12.2 2.2V7.2C12.2 10.6 9.6 12.8 6.2 14C2.8 12.8 0.2 10.6 0.2 7.2V2.2Z" fill="#2f62e6"/><path d="M2.6 4.4H9.8V7C9.8 9.2 8.2 10.6 6.2 11.4C4.2 10.6 2.6 9.2 2.6 7Z" fill="#ffffff"/><path d="M4.2 6.4L6 8.2L8.6 5.4" fill="none" stroke="#2f62e6" stroke-width="1.1"/></svg>
<svg style="left:1223px;top:770px" width="16" height="16" viewBox="0 0 16 16"><g transform="rotate(-9 8 8)"><rect x="1" y="1.4" width="14" height="13.4" rx="1.8" fill="#f0582a"/><text x="8" y="13" text-anchor="middle" font-family="Liberation Sans,sans-serif" font-weight="700" font-style="italic" font-size="13.4" fill="#fff">S</text></g></svg>
<svg style="left:1259.6px;top:772.6px" width="13" height="10.6" viewBox="0 0 13 10.6"><path d="M0.6 3.6A8.6 8.6 0 0 1 12.4 3.6" fill="none" stroke="#8e8886" stroke-width="1.1"/><path d="M2.6 5.8A5.6 5.6 0 0 1 10.4 5.8" fill="none" stroke="#cfcccb" stroke-width="1.1"/><path d="M4.6 7.8A2.8 2.8 0 0 1 8.4 7.8" fill="none" stroke="#f0f0f0" stroke-width="1.1"/><circle cx="6.5" cy="9.6" r="1" fill="#f0f0f0"/></svg>
<svg style="left:1280px;top:771.8px" width="14" height="11.6" viewBox="0 0 14 11.6"><path d="M0.4 3.8H3L6.2 0.8V10.8L3 7.8H0.4Z" fill="none" stroke="#f0f0f0" stroke-width="1"/><path d="M8 3.8A2.8 2.8 0 0 1 8 7.8M9.8 2.2A5 5 0 0 1 9.8 9.4M11.6 0.6A7.2 7.2 0 0 1 11.6 11" fill="none" stroke="#f0f0f0" stroke-width="1"/></svg>
<svg style="left:1302.6px;top:771.6px" width="15" height="12" viewBox="0 0 15 12"><rect x="3.4" y="2.4" width="10.4" height="7.4" rx="1.6" fill="none" stroke="#f0f0f0" stroke-width="1"/><rect x="5" y="4" width="5.6" height="4.2" rx="0.6" fill="#f0f0f0"/><rect x="14" y="4.6" width="1" height="3" fill="#f0f0f0"/><path d="M1.2 0.4V2M3 0.4V2M0.4 2H3.8V3.6C3.8 4.6 3 5 2.1 5C1.2 5 0.4 4.6 0.4 3.6ZM2.1 5V8.6C2.1 9.8 3 10.4 4.2 10.4" fill="none" stroke="#f0f0f0" stroke-width="0.9"/></svg>
<svg style="left:1389px;top:770px" width="15.6" height="15.6" viewBox="0 0 15.6 15.6"><circle cx="7.8" cy="7.8" r="7.7" fill="#4cc2ff"/><text x="7.8" y="11.4" text-anchor="middle" font-family="Liberation Sans,sans-serif" font-size="9.6" fill="#10202c">4</text></svg>

<!-- text layer 0 -->
<span class="t" style="left:33px;top:5.7px;font-size:12.3px;line-height:17.2px;color:#bbbbbb;letter-spacing:0.293px;"><u style="text-underline-offset:1.5px;text-decoration-thickness:0.8px">F</u>ile</span>
<span class="t" style="left:63px;top:5.7px;font-size:12.3px;line-height:17.2px;color:#bbbbbb;letter-spacing:0.449px;"><u style="text-underline-offset:1.5px;text-decoration-thickness:0.8px">E</u>dit</span>
<span class="t" style="left:96px;top:5.7px;font-size:12.3px;line-height:17.2px;color:#bbbbbb;letter-spacing:-0.109px;"><u style="text-underline-offset:1.5px;text-decoration-thickness:0.8px">V</u>iew</span>
<span class="t" style="left:133px;top:5.7px;font-size:12.3px;line-height:17.2px;color:#bbbbbb;letter-spacing:-0.068px;"><u style="text-underline-offset:1.5px;text-decoration-thickness:0.8px">N</u>avigate</span>
<span class="t" style="left:193px;top:5.7px;font-size:12.3px;line-height:17.2px;color:#bbbbbb;letter-spacing:-0.105px;"><u style="text-underline-offset:1.5px;text-decoration-thickness:0.8px">C</u>ode</span>
<span class="t" style="left:233px;top:5.7px;font-size:12.3px;line-height:17.2px;color:#bbbbbb;letter-spacing:-0.061px;"><u style="text-underline-offset:1.5px;text-decoration-thickness:0.8px">R</u>efactor</span>
<span class="t" style="left:292px;top:5.7px;font-size:12.3px;line-height:17.2px;color:#bbbbbb;letter-spacing:-0.859px;">R<u style="text-underline-offset:1.5px;text-decoration-thickness:0.8px">u</u>n</span>
<span class="t" style="left:324px;top:5.7px;font-size:12.3px;line-height:17.2px;color:#bbbbbb;letter-spacing:0.256px;"><u style="text-underline-offset:1.5px;text-decoration-thickness:0.8px">T</u>ools</span>
<span class="t" style="left:366px;top:5.7px;font-size:12.3px;line-height:17.2px;color:#bbbbbb;letter-spacing:-1.099px;">VC<u style="text-underline-offset:1.5px;text-decoration-thickness:0.8px">S</u></span>
<span class="t" style="left:398px;top:5.7px;font-size:12.3px;line-height:17.2px;color:#bbbbbb;letter-spacing:0.208px;"><u style="text-underline-offset:1.5px;text-decoration-thickness:0.8px">W</u>indow</span>
<span class="t" style="left:455px;top:5.7px;font-size:12.3px;line-height:17.2px;color:#bbbbbb;letter-spacing:-0.078px;"><u style="text-underline-offset:1.5px;text-decoration-thickness:0.8px">H</u>elp</span>
<span class="t" style="left:494px;top:5.3px;font-size:11.6px;line-height:16.2px;color:#787a7c;letter-spacing:0.087px;">南维安 [C:\Users\南维安] - ...\PycharmProjects\untitled1\图片操作.py - PyCharm</span>
<span class="t" style="left:26px;top:32.3px;font-size:11.3px;line-height:15.8px;color:#bbbbbb;letter-spacing:-0.302px;">南维安</span>
<span class="t" style="left:89px;top:31.8px;font-size:12.3px;line-height:17.2px;color:#bbbbbb;letter-spacing:-0.263px;">PycharmProjects</span>
<span class="t" style="left:207px;top:31.8px;font-size:12.3px;line-height:17.2px;color:#bbbbbb;letter-spacing:0.167px;">untitled1</span>
<span class="t" style="left:285px;top:32.0px;font-size:12.0px;line-height:16.8px;color:#bbbbbb;letter-spacing:-0.431px;">图片操作.py</span>
<span class="t" style="left:74px;top:58.5px;font-size:12.2px;line-height:17.1px;color:#bbbbbb;letter-spacing:0.152px;">movie.py</span>
<span class="t" style="left:129px;top:56.6px;font-size:14px;line-height:19.6px;color:#63676a;">×</span>
<span class="t" style="left:170px;top:58.5px;font-size:12.2px;line-height:17.1px;color:#bbbbbb;letter-spacing:-0.638px;">摄像头.py</span>
<span class="t" style="left:225px;top:56.6px;font-size:14px;line-height:19.6px;color:#63676a;">×</span>
<span class="t" style="left:265px;top:58.5px;font-size:12.2px;line-height:17.1px;color:#bbbbbb;letter-spacing:-0.409px;">CV_0624.py</span>
<span class="t" style="left:334px;top:56.6px;font-size:14px;line-height:19.6px;color:#63676a;">×</span>
<span class="t" style="left:374px;top:58.5px;font-size:12.2px;line-height:17.1px;color:#bbbbbb;letter-spacing:-0.555px;">视频流.py</span>
<span class="t" style="left:429px;top:56.6px;font-size:14px;line-height:19.6px;color:#63676a;">×</span>
<span class="t" style="left:470px;top:58.5px;font-size:12.2px;line-height:17.1px;color:#bbbbbb;letter-spacing:-0.139px;">opencv_database.py</span>
<span class="t" style="left:585.5px;top:56.6px;font-size:14px;line-height:19.6px;color:#63676a;">×</span>
<span class="t" style="left:625px;top:58.5px;font-size:12.2px;line-height:17.1px;color:#bbbbbb;letter-spacing:-0.574px;">识别对象.py</span>
<span class="t" style="left:692px;top:56.6px;font-size:14px;line-height:19.6px;color:#63676a;">×</span>
<span class="t" style="left:733px;top:58.5px;font-size:12.2px;line-height:17.1px;color:#bbbbbb;letter-spacing:-0.310px;">open_cv练习.py</span>
<span class="t" style="left:822.5px;top:56.6px;font-size:14px;line-height:19.6px;color:#63676a;">×</span>
<span class="t" style="left:862px;top:58.5px;font-size:12.2px;line-height:17.1px;color:#bbbbbb;letter-spacing:-0.574px;">图片操作.py</span>
<span class="t" style="left:929px;top:56.6px;font-size:14px;line-height:19.6px;color:#63676a;">×</span>
<span class="t" style="left:969px;top:58.5px;font-size:12.2px;line-height:17.1px;color:#bbbbbb;letter-spacing:-0.129px;">shangweiji.py</span>
<span class="t" style="left:1046.5px;top:56.6px;font-size:14px;line-height:19.6px;color:#63676a;">×</span>
<span class="t" style="left:1222.5px;top:32.7px;font-size:11.3px;line-height:15.8px;color:#bbbbbb;letter-spacing:-0.026px;">图片操作</span>
<span class="t" style="left:26px;top:516.6px;font-size:12.0px;line-height:16.8px;color:#bbbbbb;letter-spacing:-0.340px;">Run:</span>
<span class="t" style="left:86px;top:517.1px;font-size:11.2px;line-height:15.7px;color:#bbbbbb;letter-spacing:-0.191px;">图片操作</span>
<span class="t" style="left:137px;top:514.5px;font-size:14px;line-height:19.6px;color:#63676a;">×</span>
<span class="t m" style="left:85px;top:534.0px;font-size:11.08px;line-height:15.5px;color:#bbbbbb;clip-path:inset(3.2px 0 0 0);">600 400</span>
<span class="t m" style="left:85px;top:552.5px;font-size:11.08px;line-height:15.5px;color:#bbbbbb;">150</span>
<span class="t m" style="left:85px;top:571.0px;font-size:11.08px;line-height:15.5px;color:#bbbbbb;">img_type =  uint8 img_size =  2880000 img_shape =  (800, 1200, 3)</span>
<span class="t m" style="left:85px;top:589.5px;font-size:11.08px;line-height:15.5px;color:#bbbbbb;">(800, 1200, 3) &lt;class 'tuple'&gt;</span>
<span class="t m" style="left:85px;top:608.0px;font-size:11.08px;line-height:15.5px;color:#bbbbbb;">600 400</span>
<span class="t m" style="left:85px;top:626.6px;font-size:11.08px;line-height:15.5px;color:#bbbbbb;">150</span>
<span class="t m" style="left:85px;top:645.1px;font-size:11.08px;line-height:15.5px;color:#bbbbbb;">img_type =  uint8 img_size =  2880000 img_shape =  (800, 1200, 3)</span>
<span class="t m" style="left:85px;top:663.6px;font-size:11.08px;line-height:15.5px;color:#bbbbbb;">(800, 1200, 3) &lt;class 'tuple'&gt;</span>
<span class="t m" style="left:85px;top:682.1px;font-size:11.08px;line-height:15.5px;color:#bbbbbb;">600 400</span>
<span class="t" style="left:44.3px;top:720.5px;font-size:11.0px;line-height:15.4px;color:#d5d7d9;letter-spacing:-0.554px;"><u style="text-decoration-thickness:0.8px;text-underline-offset:1.5px">4</u>: Run</span>
<span class="t" style="left:107.6px;top:720.5px;font-size:11.0px;line-height:15.4px;color:#bbbbbb;letter-spacing:-0.604px;"><u style="text-decoration-thickness:0.8px;text-underline-offset:1.5px">6</u>: TODO</span>
<span class="t" style="left:182.8px;top:720.5px;font-size:11.0px;line-height:15.4px;color:#bbbbbb;letter-spacing:-0.447px;">Terminal</span>
<span class="t" style="left:258px;top:720.5px;font-size:11.0px;line-height:15.4px;color:#bbbbbb;letter-spacing:-0.477px;">Python Console</span>
<span class="t" style="left:1348px;top:720.5px;font-size:11.0px;line-height:15.4px;color:#bbbbbb;letter-spacing:-0.505px;">Event Log</span>
<span class="t" style="left:25.3px;top:738.2px;font-size:12.0px;line-height:16.8px;color:#bbbbbb;letter-spacing:0.071px;">Unknown Module Type: Cannot determine module type ("JAVA_MODULE") for the following module:"南维安" // The module will be treated as a Unknown ... (24 minutes ago)</span>
<span class="t" style="left:986px;top:738.2px;font-size:12.0px;line-height:16.8px;color:#589df6;letter-spacing:-0.076px;">24 processes running...</span>
<span class="t" style="left:1121.8px;top:738.6px;font-size:11.4px;line-height:16.0px;color:#bbbbbb;letter-spacing:-0.243px;">46:1</span>
<span class="t" style="left:1155.7px;top:738.9px;font-size:11.0px;line-height:15.4px;color:#bbbbbb;letter-spacing:-0.609px;">CRLF</span>
<span class="t" style="left:1193px;top:738.7px;font-size:11.3px;line-height:15.8px;color:#6f7274;letter-spacing:-0.203px;">UTF-8</span>
<span class="t" style="left:48.5px;top:763.1px;font-size:11.2px;line-height:15.7px;color:#f2f2f2;letter-spacing:-0.450px;">27°C</span>
<span class="t" style="left:48.5px;top:778.4px;font-size:10.9px;line-height:15.3px;color:#e6e6e6;">多云</span>
<span class="t" style="left:1189px;top:765.7px;font-size:17.6px;line-height:24.6px;color:#f2f2f2;letter-spacing:0.750px;">A</span>
<span class="t" style="left:1352px;top:762.5px;font-size:11.2px;line-height:15.7px;color:#f2f2f2;letter-spacing:-0.300px;">22:57</span>
<span class="t" style="left:1333.8px;top:777.5px;font-size:11.2px;line-height:15.7px;color:#f2f2f2;letter-spacing:0.142px;">2022/7/3</span>
<span class="t" style="left:-9.6px;top:75.0px;font-size:11.0px;line-height:15.4px;color:#d4d6d8;letter-spacing:-0.248px;transform:rotate(-90deg);transform-origin:50% 50%;"><u style="text-decoration-thickness:0.8px;text-underline-offset:1.5px">1</u>: Project</span>
<span class="t" style="left:-15.8px;top:565.6px;font-size:10.6px;line-height:14.8px;color:#a8abad;letter-spacing:-0.113px;transform:rotate(-90deg);transform-origin:50% 50%;"><u style="text-decoration-thickness:0.8px;text-underline-offset:1.5px">Z</u>: Structure</span>
<span class="t" style="left:-14.3px;top:655.1px;font-size:10.6px;line-height:14.8px;color:#a8abad;letter-spacing:-0.363px;transform:rotate(-90deg);transform-origin:50% 50%;"><u style="text-decoration-thickness:0.8px;text-underline-offset:1.5px">2</u>: Favorites</span>
<!-- tk.html -->
<!-- tk window shadow + frame -->
<div class="a" style="left:637.5px;top:92px;width:578.5px;height:489px;border-radius:7px;background:#f0f0f0;box-shadow:0 0 0 0.6px rgba(0,0,0,.55),0 6px 18px rgba(0,0,0,.45);overflow:hidden;">
  <div class="a" style="left:0;top:0;width:100%;height:29.5px;background:#ffffff;border-bottom:1px solid #e3e3e3;"></div>
</div>
<!-- feather icon -->
<svg style="left:647.5px;top:97.5px" width="10" height="16" viewBox="0 0 10 16">
  <path d="M8.900 0.400C5 1 1.800 4.400 1.600 8.800L1.500 11.600C5 11.200 7.800 8.400 8.700 4.800C9.100 3.200 9.100 1.600 8.900 0.400Z" fill="#5468a4"/>
  <path d="M8.700 0.800C6.400 3.600 3.800 7.600 0.900 15" stroke="#20294a" stroke-width="1" fill="none"/>
  <path d="M7.900 1.600C5.200 2.600 3 5.200 2.600 8.600" stroke="#a9b8e2" stroke-width="1.100" fill="none"/>
  <path d="M3 10.400C5.600 9.400 7.400 7.200 8.200 4.800" stroke="#2f3c72" stroke-width="0.800" fill="none"/>
</svg>
<!-- window controls -->
<svg style="left:1100px;top:100px" width="102" height="14" viewBox="1100 100 102 14" fill="none" stroke="#1a1a1a" stroke-width="1">
  <path d="M1102 106.2H1111"/>
  <rect x="1144.9" y="102.3" width="8.6" height="8.4" rx="1.3"/>
  <path d="M1189.2 102.2L1198 111M1198 102.2L1189.2 111"/>
</svg>
<!-- slider -->
<div class="a" style="left:787px;top:143px;width:277px;height:14.5px;background:#c9c9c9;border-top:1px solid #a9a9a9;border-left:1px solid #a9a9a9;border-right:1px solid #e9e9e9;border-bottom:1px solid #e9e9e9;"></div>
<div class="a" style="left:934.5px;top:143.5px;width:27.5px;height:13.5px;background:#f0f0f0;border-top:1px solid #ffffff;border-left:1px solid #ffffff;border-right:1px solid #7a7a7a;border-bottom:1px solid #7a7a7a;"></div>
<div class="a" style="left:947.6px;top:144px;width:1px;height:12.5px;background:#8a8a8a;"></div>
<div class="a" style="left:948.6px;top:144px;width:1px;height:12.5px;background:#ffffff;"></div>
<!-- button -->
<div class="a" style="left:882px;top:161.5px;width:88px;height:27.5px;background:#f0f0f0;border-top:1px solid #ffffff;border-left:1px solid #ffffff;border-right:1.5px solid #707070;border-bottom:1.5px solid #707070;"></div>

<!-- photo.svg -->
<svg style="left:656px;top:203.6px" width="555.6" height="369.6" viewBox="656 203.6 555.6 369.6" preserveAspectRatio="none">
  <defs>
    <linearGradient id="pbg" x1="0" y1="0" x2="1" y2="0">
      <stop offset="0" stop-color="#7ba7a3"/>
      <stop offset="0.12" stop-color="#86afab"/>
      <stop offset="0.3" stop-color="#93b8b5"/>
      <stop offset="0.45" stop-color="#8eb4b0"/>
      <stop offset="0.72" stop-color="#769f9a"/>
      <stop offset="1" stop-color="#64908a"/>
    </linearGradient>
    <radialGradient id="pglow" cx="0.37" cy="0.1" r="0.42">
      <stop offset="0" stop-color="#b2cecc" stop-opacity="0.5"/>
      <stop offset="1" stop-color="#b4d0ce" stop-opacity="0"/>
    </radialGradient>
    <linearGradient id="pdark" x1="0" y1="0" x2="0" y2="1">
      <stop offset="0" stop-color="#5f8a84" stop-opacity="0"/>
      <stop offset="1" stop-color="#5f8a84" stop-opacity="0.25"/>
    </linearGradient>
    <radialGradient id="hairg" cx="0.5" cy="0.35" r="0.7">
      <stop offset="0" stop-color="#756564"/>
      <stop offset="1" stop-color="#675857"/>
    </radialGradient>
    <filter id="pblur" x="-5%" y="-5%" width="110%" height="110%"><feGaussianBlur stdDeviation="0.9"/></filter>
    <filter id="pblur2" x="-10%" y="-10%" width="120%" height="120%"><feGaussianBlur stdDeviation="2.2"/></filter>
    <clipPath id="pclip"><rect x="656" y="203.6" width="555.6" height="369.6"/></clipPath>
  </defs>
  <g clip-path="url(#pclip)">
    <rect x="656" y="203.6" width="555.6" height="369.6" fill="url(#pbg)"/>
    <rect x="656" y="203.6" width="555.6" height="369.6" fill="url(#pglow)"/>
    <rect x="656" y="203.6" width="555.6" height="369.6" fill="url(#pdark)"/>
    <!-- wall below ledge -->
    <path d="M656 537L1212 525V574H656Z" fill="#ecedee"/>
    <!-- ledge -->
    <path d="M656 531L1212 519.5V527L656 539Z" fill="#d2a595"/>
    <path d="M656 531L1212 519.500V521.300L656 532.800Z" fill="#b78b7c" opacity="0.8"/>
    <g filter="url(#pblur)">
      <!-- hair back -->
      <path d="M879 245C858 242 836 251 827 275C820 296 818 322 821 342C823 358 829 368 836 371L850 375L900 376C911 383 924 381 930 369C937 352 938 330 935 304C932 273 916 249 879 245Z" fill="#7a6a68" opacity="0.5" filter="url(#pblur2)"/>
      <path d="M879 246C860 243 838 252 829 275C822 295 820 320 823 340C825 355 830 365 836 369L850 373L900 374C910 381 922 379 928 368C935 352 936 330 933 305C930 275 915 250 879 246Z" fill="url(#hairg)"/>
      <path d="M921 330C926 345 926 362 920 374C926 372 931 364 933 352C935 340 934 322 932 310Z" fill="#9a857f" opacity="0.55"/>
      <!-- neck -->
      <path d="M856 352L854 380L874 399L898 380L897 352Z" fill="#f3ddd4"/>
      <path d="M856 366C866 374 886 374 896 364L897 372C888 380 866 381 855 373Z" fill="#e3c3b7" opacity="0.8"/>
      <!-- face -->
      <path d="M834 312C834 290 850 280 876 280C900 280 917 292 917.500 314C918 335 908 355 893 366C884 373 866 374 856 367C843 357 834 335 834 312Z" fill="#f6e4dd"/>
      <ellipse cx="850" cy="336" rx="8" ry="6" fill="#f3cfc8" opacity="0.22"/>
      <ellipse cx="903" cy="338" rx="8" ry="6" fill="#f3cfc8" opacity="0.22"/>
      <!-- bangs -->
      <path d="M879 247C858 248 838 262 832 290C830 302 831 315 834 326C835 314 838 305 843 298L842 309C846 302 851 297 857 294L855 305C860 299 866 295 872 292L872 302C877 297 883 293 890 292L891 300C896 296 901 294 906 294C910 300 914 308 916 318L918 332C924 318 925 298 921 284C915 262 900 248 879 247Z" fill="#695958"/>
      <path d="M879 249C877 258 874 270 870 284" stroke="#b5a5a1" stroke-width="1.100" fill="none" opacity="0.55"/>
      <path d="M842 309C844 300 848 290 856 280M855 305C858 296 863 286 870 278M872 302C875 294 880 285 886 278M891 300C894 292 898 284 904 278" stroke="#5a4a48" stroke-width="1.200" fill="none" opacity="0.5"/>
      <!-- eyes / brows -->
      <path d="M848 315Q855 309 862 314.500Q855 319 848 315Z" fill="#fbf4f1"/>
      <path d="M887 317Q894 311 901 316.500Q894 321 887 317Z" fill="#fbf4f1"/>
      <circle cx="855" cy="314.600" r="2.700" fill="#4a3733"/><circle cx="894" cy="316.600" r="2.700" fill="#4a3733"/>
      <path d="M847.500 315Q855 308.500 862.500 314" stroke="#54403b" stroke-width="1.300" fill="none"/>
      <path d="M886.500 317Q894 310.500 901.500 316" stroke="#54403b" stroke-width="1.300" fill="none"/>
      <path d="M846 306.500Q854 303 863 306" stroke="#b9a097" stroke-width="1.500" fill="none"/>
      <path d="M886 307.500Q895 304 904 308.500" stroke="#b9a097" stroke-width="1.500" fill="none"/>
      <!-- nose -->
      <path d="M869 335Q873 339 878 336" stroke="#dcb6aa" stroke-width="1.300" fill="none"/>
      <path d="M874 320Q872.500 328 871 333" stroke="#efd9d0" stroke-width="1" fill="none"/>
      <!-- mouth -->
      <path d="M858 345.500Q873 350 890 345.500Q884 357.500 873 357.500Q863 357 858 345.500Z" fill="#e89a98"/>
      <path d="M862 347.300Q873 350.500 886 347.300Q880 352 873 352Q866 352 862 347.300Z" fill="#fdf6f3"/>
      <!-- left arm (viewer left) -->
      <path d="M778.500 500L811.500 506L813 574L779 574Z" fill="#f4e1d9"/>
      <!-- right arm: upper + forearm + hand -->
      <path d="M960 486L1000 470L1024 520C1026 536 1018 546 1008 545C1000 544 996 540 992 534Z" fill="#f4dfd6"/>
      <path d="M1001 474C1002 448 1003 420 1004.600 395L1030.700 405C1031 440 1030 480 1029 506C1028 524 1024 538 1016 544C1010 547 1003 544 1000 538Z" fill="#f6e4dc"/>
      <path d="M1004.600 397C1003 392 1005 390 1008 388C1012 385 1018 382 1022 380C1026 378 1030 376 1034 376.500C1040 374 1050 370 1058 367C1064 364.500 1069 364 1071 366.500C1072.500 369 1071 372 1068 374C1058 381 1046 392 1036 400C1033 404 1031 407 1030.700 409Z" fill="#f7e6de"/>
      <path d="M1024 382C1030 380 1040 377 1048 373" stroke="#e8cabd" stroke-width="1.100" fill="none"/>
      <path d="M1016 412C1018 440 1018 480 1014 520" stroke="#fbeee8" stroke-width="6" fill="none" opacity="0.3"/>
      <!-- skirt -->
      <path d="M814 546H943.500L955 574H811Z" fill="#c4cbd7"/>
      <path d="M814 549C850 554 910 554 943.500 549" stroke="#b3bbca" stroke-width="1.600" fill="none"/>
      <!-- shirt -->
      <path d="M842 372.500C824 384 800 400 784 415C771 440 761 470 756 494.800L808.800 504.500L810 520L814 548H943.500L950 510L957 478L964 489L1001.500 470C996 442 984 412 960 396C944 388 922 380 904 372.500L874 400Z" fill="#f8f9fb"/>
      <path d="M808.800 504C810 484 814 462 822 446" stroke="#dde1e9" stroke-width="1.500" fill="none"/>
      <path d="M957 478C955 464 950 450 944 438" stroke="#dde1e9" stroke-width="1.500" fill="none"/>
      <path d="M790 420C800 440 806 470 808 500" stroke="#eceff4" stroke-width="3" fill="none"/>
      <path d="M850 470C870 490 900 500 930 490M840 520C870 530 910 528 940 515" stroke="#eef0f4" stroke-width="2.500" fill="none"/>
      <!-- collar -->
      <path d="M845 373L855 369L874 397L858 405L839 386Z" fill="#fbfcfd" stroke="#e3e6ec" stroke-width="0.8"/>
      <path d="M903 373L895 369L874 397L892 405L909 386Z" fill="#fbfcfd" stroke="#e3e6ec" stroke-width="0.8"/>
      <!-- bow -->
      <path d="M872 398L844 392.500C841 398 842 408 847 413L872 403Z" fill="#56659a"/>
      <path d="M876 398L902 389C905.500 394 904.500 402 900 406.500L876 403Z" fill="#56659a"/>
      <path d="M871 401L854 432L883 451L902 426L878 401Z" fill="#5a699e"/>
      <path d="M859 434L873 404M866 440L876 406M874 445L879 406M884 449L882 406M893 438L880 404" stroke="#dfe4f3" stroke-width="1.100" fill="none" opacity="0.900"/>
      <path d="M860 422L896 433M864 414L898 424" stroke="#39467a" stroke-width="1" fill="none" opacity="0.600"/>
      <path d="M846 396L870 401M849 409L870 403M900 392.500L878 400M898 404L878 402.500" stroke="#c9d0e6" stroke-width="0.800" fill="none" opacity="0.750"/>
      <rect x="869" y="396.500" width="9" height="8" rx="2" fill="#3b4876"/>
    </g>
    <!-- watermark -->
    <rect x="656" y="555" width="136" height="19" fill="#c9cccd" opacity="0.8"/>
    <text x="661" y="568" font-family="'Liberation Sans','Noto Sans CJK SC',sans-serif" font-size="7" fill="#e4e6e7">图片来源：视觉中国</text>
  </g>
</svg>

<!-- text layer 1 -->
<span class="t" style="left:664px;top:98.4px;font-size:11.6px;line-height:16.2px;color:#111111;letter-spacing:0.484px;">tk</span>
<span class="t" style="left:940px;top:125.5px;font-size:11.2px;line-height:15.7px;color:#222222;letter-spacing:0.109px;">150</span>
<span class="t" style="left:887px;top:168.1px;font-size:11.1px;line-height:15.5px;color:#000000;letter-spacing:0.047px;">查看图片透明度</span>

</div>
</body></html>
